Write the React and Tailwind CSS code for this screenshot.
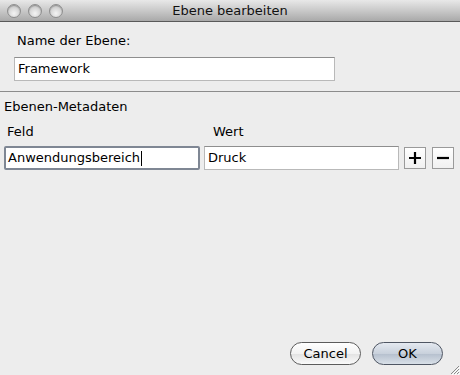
import React from "react";

function Light() {
  return (
    <div className="w-[14px] h-[14px] rounded-full border border-[#8e8e8e] bg-[radial-gradient(circle_at_50%_70%,#f4f4f4_0%,#d4d4d4_55%,#b4b4b4_100%)] shadow-[inset_0_1px_1px_rgba(0,0,0,0.25)]" />
  );
}

function Field({ children, className = "" }) {
  return (
    <div
      className={
        "h-[24px] bg-white border border-[#b9b9b9] border-t-[#8e8e8e] flex items-center pl-[3px] text-[13px] text-black " +
        className
      }
    >
      {children}
    </div>
  );
}

export default function App() {
  return (
    <div
      className="w-[460px] h-[375px] bg-[#ededed] flex flex-col overflow-hidden relative"
      style={{ fontFamily: '"DejaVu Sans", "Liberation Sans", sans-serif' }}
    >
      {/* Title bar */}
      <div className="h-[22px] shrink-0 border-b border-[#5a5a5a] bg-[linear-gradient(#e8e8e8,#c9c9c9_50%,#a9a9a9)] flex items-center relative">
        <div className="absolute left-[7px] top-[4px] flex gap-[7px]">
          <Light />
          <Light />
          <Light />
        </div>
        <div className="flex-1 text-center text-[13px] text-[#111] leading-[16px]">
          Ebene bearbeiten
        </div>
      </div>

      {/* Name section */}
      <div className="pl-[14px] pt-[11px]">
        <div className="text-[13px] leading-[16px] text-black pl-[3px]">Name der Ebene:</div>
        <Field className="mt-[8px] w-[321px]">Framework</Field>
      </div>

      <div className="mt-[10px] h-px bg-[#8c8c8c]" />

      {/* Metadata */}
      <div className="pl-[4px] pt-[7px]">
        <div className="text-[13px] leading-[16px] text-black">Ebenen-Metadaten</div>
        <div className="flex mt-[9px] text-[13px] leading-[16px] text-black">
          <div className="w-[209px] pl-[3px]">Feld</div>
          <div>Wert</div>
        </div>
        <div className="flex items-center mt-[6px]">
          <div className="w-[196px] h-[24px] bg-white border-2 border-[#7f8794] rounded-[2px] flex items-center pl-[2px] text-[13px] text-black">
            <span>Anwendungsbereich</span>
            <span className="w-px h-[15px] bg-black ml-[1px]" />
          </div>
          <Field className="ml-[4px] w-[195px] h-[22px]">Druck</Field>
          <button className="ml-[5px] w-[22px] h-[22px] border border-[#9a9a9a] bg-[linear-gradient(#ffffff,#f0f0f0)] flex items-center justify-center">
            <svg width="14" height="14" viewBox="0 0 14 14">
              <path d="M7 1V13M1 7H13" stroke="#000" strokeWidth="2.2" />
            </svg>
          </button>
          <button className="ml-[6px] w-[22px] h-[22px] border border-[#9a9a9a] bg-[linear-gradient(#ffffff,#f0f0f0)] flex items-center justify-center">
            <svg width="14" height="14" viewBox="0 0 14 14">
              <path d="M1 7H13" stroke="#000" strokeWidth="2.2" />
            </svg>
          </button>
        </div>
      </div>

      <div className="flex-1" />

      {/* Buttons */}
      <div className="flex justify-end pr-[17px] pb-[10px] gap-[11px]">
        <button className="w-[71px] h-[23px] rounded-full border border-[#5c5c5c] bg-[linear-gradient(#ffffff,#f2f2f2_50%,#e2e2e2_51%,#fafafa)] text-[13px] text-black leading-none">
          Cancel
        </button>
        <button className="w-[71px] h-[23px] rounded-full border border-[#4f5663] bg-[linear-gradient(#e4e9f0,#c9d1dc_50%,#b5bfcd_51%,#d9e0e8)] text-[13px] text-black leading-none">
          OK
        </button>
      </div>

      {/* Resize grip */}
      <svg className="absolute right-0 bottom-0" width="12" height="12" viewBox="0 0 12 12">
        <path d="M11 3L3 11M11 6L6 11M11 9L9 11" stroke="#8a8a8a" strokeWidth="1" />
        <path d="M12 4L4 12M12 7L7 12M12 10L10 12" stroke="#ffffff" strokeWidth="1" />
      </svg>
    </div>
  );
}
